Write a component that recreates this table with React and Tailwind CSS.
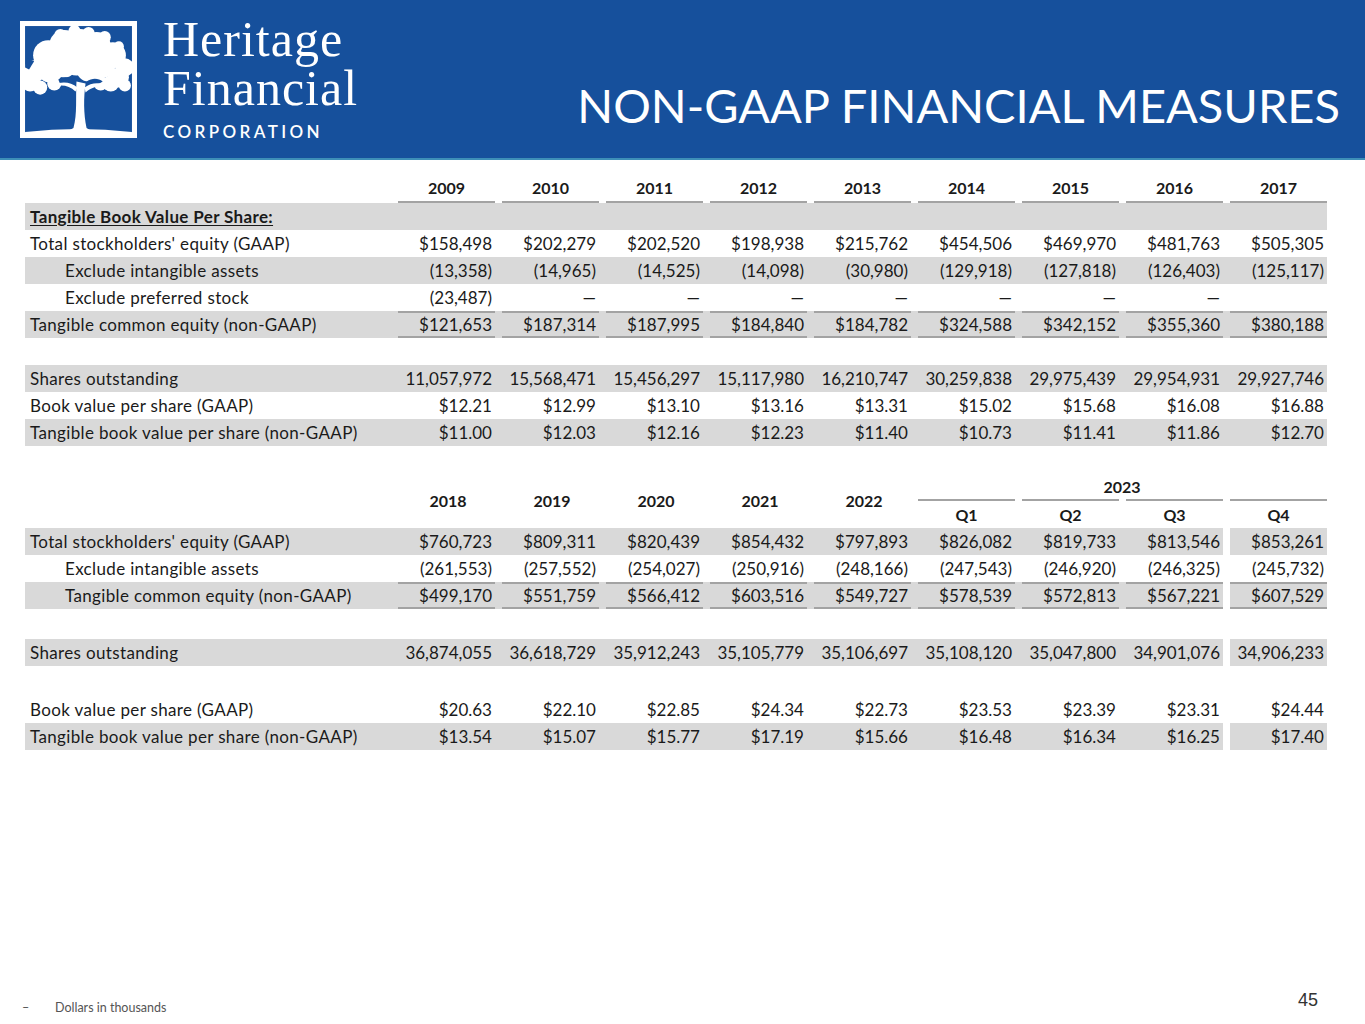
import React from 'react';

const shade = 'bg-[#d9d9d9]';

const table1 = [
  { label: 'Tangible Book Value Per Share:', heading: true, shaded: true, values: Array(9).fill('') },
  { label: "Total stockholders' equity (GAAP)", values: ['$158,498', '$202,279', '$202,520', '$198,938', '$215,762', '$454,506', '$469,970', '$481,763', '$505,305'] },
  { label: 'Exclude intangible assets', indent: true, shaded: true, values: ['(13,358)', '(14,965)', '(14,525)', '(14,098)', '(30,980)', '(129,918)', '(127,818)', '(126,403)', '(125,117)'] },
  { label: 'Exclude preferred stock', indent: true, values: ['(23,487)', '—', '—', '—', '—', '—', '—', '—', ''] },
  { label: 'Tangible common equity (non-GAAP)', shaded: true, top: true, bottom: true, values: ['$121,653', '$187,314', '$187,995', '$184,840', '$184,782', '$324,588', '$342,152', '$355,360', '$380,188'] },
  { spacer: 27 },
  { label: 'Shares outstanding', shaded: true, values: ['11,057,972', '15,568,471', '15,456,297', '15,117,980', '16,210,747', '30,259,838', '29,975,439', '29,954,931', '29,927,746'] },
  { label: 'Book value per share (GAAP)', values: ['$12.21', '$12.99', '$13.10', '$13.16', '$13.31', '$15.02', '$15.68', '$16.08', '$16.88'] },
  { label: 'Tangible book value per share (non-GAAP)', shaded: true, values: ['$11.00', '$12.03', '$12.16', '$12.23', '$11.40', '$10.73', '$11.41', '$11.86', '$12.70'] },
];

const table2 = [
  { label: "Total stockholders' equity (GAAP)", shaded: true, values: ['$760,723', '$809,311', '$820,439', '$854,432', '$797,893', '$826,082', '$819,733', '$813,546', '$853,261'] },
  { label: 'Exclude intangible assets', indent: true, values: ['(261,553)', '(257,552)', '(254,027)', '(250,916)', '(248,166)', '(247,543)', '(246,920)', '(246,325)', '(245,732)'] },
  { label: 'Tangible common equity (non-GAAP)', indent: true, shaded: true, top: true, bottom: true, values: ['$499,170', '$551,759', '$566,412', '$603,516', '$549,727', '$578,539', '$572,813', '$567,221', '$607,529'] },
  { spacer: 30 },
  { label: 'Shares outstanding', shaded: true, values: ['36,874,055', '36,618,729', '35,912,243', '35,105,779', '35,106,697', '35,108,120', '35,047,800', '34,901,076', '34,906,233'] },
  { spacer: 30 },
  { label: 'Book value per share (GAAP)', values: ['$20.63', '$22.10', '$22.85', '$24.34', '$22.73', '$23.53', '$23.39', '$23.31', '$24.44'] },
  { label: 'Tangible book value per share (non-GAAP)', shaded: true, values: ['$13.54', '$15.07', '$15.77', '$17.19', '$15.66', '$16.48', '$16.34', '$16.25', '$17.40'] },
];

// leafy canopy blobs for the tree mark
const leaves = [
  [28, 34, 15], [44, 24, 15], [60, 21, 13], [76, 25, 14], [92, 34, 13], [104, 46, 9],
  [14, 50, 11], [30, 48, 13], [56, 38, 16], [80, 42, 15], [98, 56, 10], [104, 64, 6],
  [10, 62, 8], [20, 66, 7], [40, 14, 6], [54, 10, 6], [68, 12, 6], [84, 16, 6], [98, 25, 5],
  [44, 44, 12], [68, 48, 12], [90, 62, 8], [34, 62, 7], [80, 62, 7],
];

const Logo = () => (
  <div className="flex items-start gap-[26px]">
    <svg width="117" height="117" viewBox="0 0 116 116" className="mt-[21px] shrink-0">
      <defs>
        <clipPath id="inner">
          <rect x="5" y="5" width="106" height="106" />
        </clipPath>
      </defs>
      <g clipPath="url(#inner)" fill="#fff">
        {leaves.map(([cx, cy, r], i) => (
          <circle key={i} cx={cx} cy={cy} r={r} />
        ))}
        <path d="M5 36 L14 40 L9 48 L5 46 Z" fill="#16509c" />
        <path d="M38 58 C44 54 50 56 54 60 C50 63 44 64 40 63 Z" fill="#16509c" />
        <path d="M66 60 C72 56 78 57 82 60 C78 63 72 64 68 63 Z" fill="#16509c" />
        <path d="M56 60 C55 76 57 92 53 106 L44 111 L74 111 L66 106 C63 92 63 76 65 62 Z" />
        <path d="M57 66 C50 60 42 60 32 63 L33 65 C42 63 49 64 55 70 Z" />
        <path d="M64 66 C71 60 80 61 89 64 L88 66 C80 64 72 64 65 71 Z" />
        <path d="M5 110 Q58 104 111 110 V116 H5 Z" />
      </g>
      <rect x="2.5" y="2.5" width="111" height="111" fill="none" stroke="#fff" strokeWidth="5" />
    </svg>
    <div className="flex flex-col pt-[14px] text-white">
      <span className="font-['Liberation_Serif',serif] text-[50px] leading-[50px] tracking-[1px]">Heritage</span>
      <span className="font-['Liberation_Serif',serif] text-[50px] leading-[48px] tracking-[1px]">Financial</span>
      <span className="mt-[11px] font-['Lato',sans-serif] text-[17px] font-semibold leading-none tracking-[0.2em]">CORPORATION</span>
    </div>
  </div>
);

const ValueCell = ({ value, shaded, gapShaded = true, top, bottom, bold, align = 'right' }) => (
  <div className="flex w-[104px] shrink-0">
    <div className={`w-[7px] shrink-0 ${shaded && gapShaded ? shade : ''}`} />
    <div
      className={`flex w-[97px] items-center pr-[3px] ${align === 'right' ? 'justify-end' : 'justify-center pl-[3px]'} ${shaded ? shade : ''} ${top ? 'border-t-2 border-[#a3a3a3]' : ''} ${bottom ? 'border-b-2 border-[#a3a3a3]' : ''} ${bold ? 'font-bold' : ''}`}
    >
      {value}
    </div>
  </div>
);

const Row = ({ row, q4Gap }) => {
  if (row.spacer) return <div style={{ height: row.spacer }} />;
  return (
    <div className="flex h-[27px]">
      <div className={`flex w-[366px] shrink-0 items-center tracking-[0.35px] ${row.indent ? 'pl-[40px]' : 'pl-[5px]'} ${row.shaded ? shade : ''}`}>
        {row.heading ? <span className="font-bold underline underline-offset-2">{row.label}</span> : row.label}
      </div>
      {row.values.map((v, i) => (
        <ValueCell
          key={i}
          value={v}
          shaded={row.shaded}
          gapShaded={!(q4Gap && i === 8)}
          top={row.top}
          bottom={row.bottom}
        />
      ))}
    </div>
  );
};

const App = () => {
  const years1 = ['2009', '2010', '2011', '2012', '2013', '2014', '2015', '2016', '2017'];
  const years2 = ['2018', '2019', '2020', '2021', '2022'];

  return (
    <div className="flex h-[1024px] w-[1365px] flex-col bg-white font-['Lato',sans-serif] text-[17px] text-[#1a1a1a]">
      <header className="flex h-[160px] shrink-0 items-start justify-between border-b-2 border-[#3d8fb8] bg-[#16509c] pl-[20px] pr-[25px]">
        <Logo />
        <h1 className="mt-[77px] text-[47px] font-normal leading-[56px] text-white">NON-GAAP FINANCIAL MEASURES</h1>
      </header>

      <main className="pl-[25px] pt-[15px]">
        <div className="flex h-[28px] text-[16px]">
          <div className="w-[366px] shrink-0" />
          {years1.map((y) => (
            <ValueCell key={y} value={y} bottom bold align="center" />
          ))}
        </div>
        {table1.map((row, i) => (
          <Row key={i} row={row} />
        ))}

        <div className="mt-[28px] flex h-[54px] text-[16px]">
          <div className="w-[366px] shrink-0" />
          {years2.map((y) => (
            <div key={y} className="flex w-[104px] shrink-0 items-center justify-center pl-[10px] font-bold">
              {y}
            </div>
          ))}
          <div className="flex flex-col">
            <div className="flex h-[27px] flex-col">
              <div className="flex flex-1 items-center justify-center pl-[6px] font-bold">2023</div>
              <div className="flex">
                {[0, 1, 2, 3].map((i) => (
                  <div key={i} className="flex w-[104px]">
                    <div className="w-[7px]" />
                    <div className="h-[2px] w-[97px] bg-[#a3a3a3]" />
                  </div>
                ))}
              </div>
            </div>
            <div className="flex h-[27px]">
              {['Q1', 'Q2', 'Q3', 'Q4'].map((q) => (
                <ValueCell key={q} value={q} bold align="center" />
              ))}
            </div>
          </div>
        </div>
        {table2.map((row, i) => (
          <Row key={i} row={row} q4Gap />
        ))}
      </main>

      <div className="flex-1" />

      <footer className="flex h-[42px] shrink-0 items-start justify-between pl-[22px] pr-[47px]">
        <div className="mt-[17px] flex items-center text-[12.5px] text-[#555]">
          <span className="w-[33px]">–</span>
          <span>Dollars in thousands</span>
        </div>
        <span className="mt-[5px] font-['Liberation_Sans',sans-serif] text-[18px] text-[#333]">45</span>
      </footer>
    </div>
  );
};

export default App;
